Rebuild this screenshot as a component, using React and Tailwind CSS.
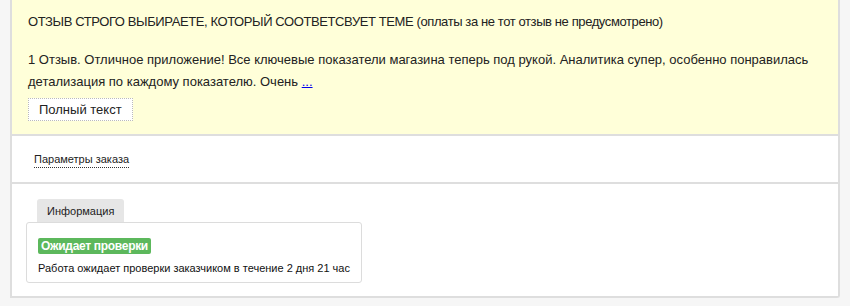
export default function App() {
  return (
    <div className="min-h-screen bg-[#f6f6f6] text-[#222] font-['Liberation_Sans',Arial,sans-serif]">
      <div className="ml-[10px] w-[830px] bg-white border-2 border-t-0 border-[#dedede] rounded-br-[3px]">
        {/* review text */}
        <div className="bg-[#ffffd9] border-b-2 border-[#dedede] px-[16px] pt-[11px] pb-[13px] text-[13px] leading-[22px]">
          <p className="tracking-[-0.4px]">ОТЗЫВ СТРОГО ВЫБИРАЕТЕ, КОТОРЫЙ СООТВЕТСВУЕТ ТЕМЕ (оплаты за не тот отзыв не предусмотрено)</p>
          <p className="mt-[16px]">
            1 Отзыв. Отличное приложение! Все ключевые показатели магазина теперь под рукой. Аналитика супер, особенно понравилась детализация по каждому показателю. Очень{' '}
            <a href="#" className="text-[#0000ee] underline">...</a>
          </p>
          <button className="block mt-[5px] h-[23px] px-[10px] bg-white border border-dotted border-[#bbb] text-[13px] leading-[20px] text-[#222]">
            Полный текст
          </button>
        </div>

        {/* order params */}
        <div className="border-b-2 border-[#dedede] px-[22px] h-[48px] flex items-center">
          <span className="text-[11px] leading-[15px] border-b border-dotted border-[#333] mt-[1px]">Параметры заказа</span>
        </div>

        {/* info tab */}
        <div className="px-[14px] pt-[15px] pb-[13px]">
          <div className="ml-[11px] w-fit bg-[#e6e6e6] rounded-t-[3px] px-[10px] h-[23px] text-[11px] leading-[24px]">
            Информация
          </div>
          <div className="w-[336px] border border-[#dcdcdc] rounded-[3px] px-[11px] pt-[15px] pb-[6px]">
            <div className="w-fit bg-[#5cb85c] text-white font-bold text-[12px] leading-[16px] px-[3px] rounded-[2px] tracking-[-0.3px]">
              Ожидает проверки
            </div>
            <p className="text-[11px] leading-[16px] mt-[6px] text-[#111]">Работа ожидает проверки заказчиком в течение 2 дня 21 час</p>
          </div>
        </div>
      </div>
    </div>
  )
}
